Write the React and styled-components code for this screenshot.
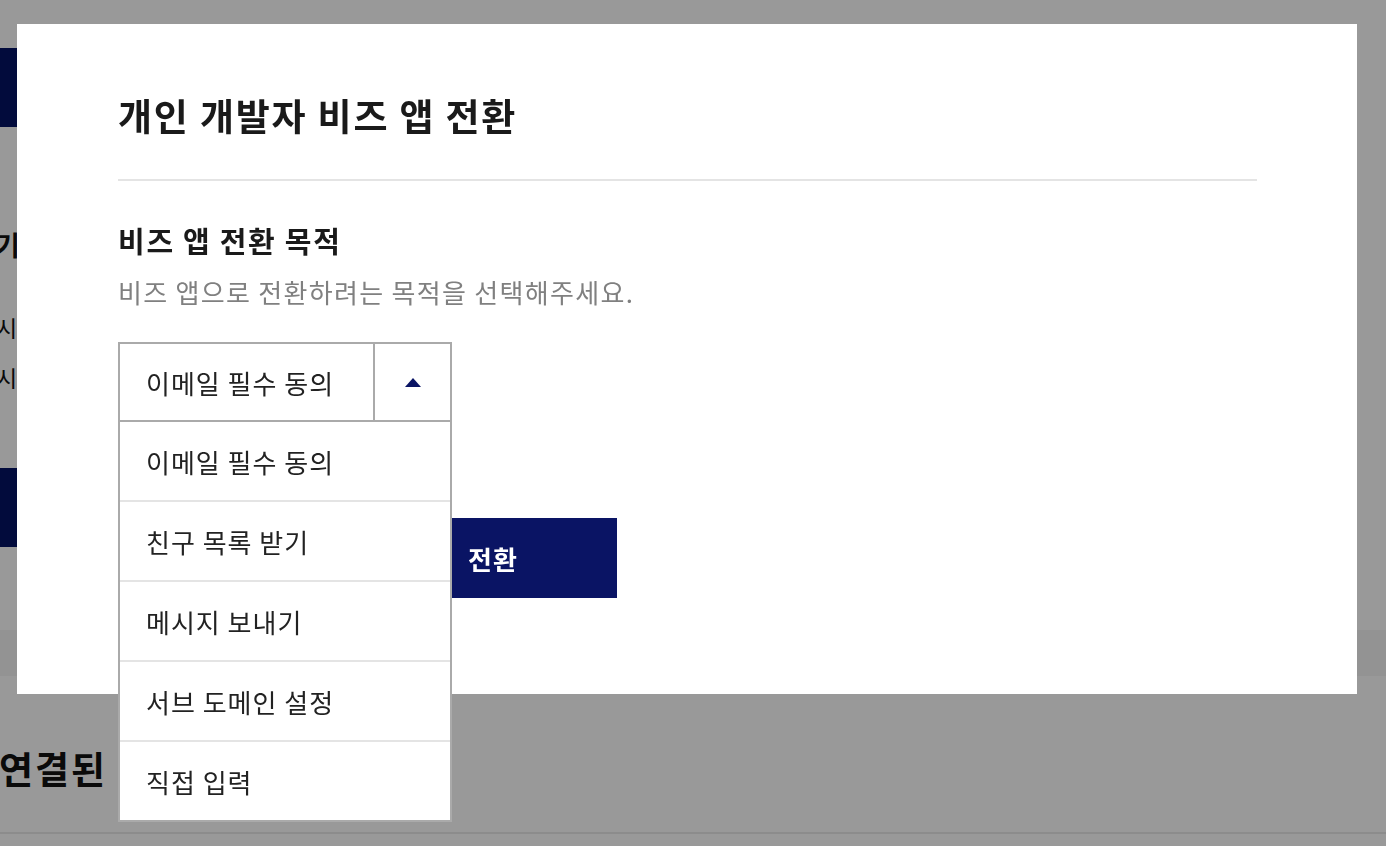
import React, { useState } from "react";
import styled, { createGlobalStyle } from "styled-components";

const NAVY = "#0a1464";
const FONT = `"Noto Sans CJK KR", "Noto Sans", sans-serif`;

const GlobalStyle = createGlobalStyle`
  html, body {
    margin: 0;
    padding: 0;
    background: #fff;
    font-family: ${FONT};
    overflow: hidden;
  }
  * {
    box-sizing: border-box;
  }
`;

const PURPOSES = [
  "이메일 필수 동의",
  "친구 목록 받기",
  "메시지 보내기",
  "서브 도메인 설정",
  "직접 입력"
];

/* page behind the dialog */

const BackPage = styled.div`
  width: 1386px;
  height: 846px;
  display: flex;
  flex-direction: column;
  background: #fff;
  color: #111;
`;

const NavyBlock = styled.div`
  width: 320px;
  height: 79px;
  flex-shrink: 0;
  background: #041364;
  margin-top: ${p => p.$top}px;
`;

const BackHeading = styled.div`
  font-size: 27px;
  font-weight: 700;
  line-height: 36px;
  margin-top: ${p => p.$top}px;
  margin-left: -5px;
`;

const BackLine = styled.div`
  font-size: 23px;
  line-height: 30px;
  margin-top: ${p => p.$top}px;
  margin-left: -4px;
`;

const Band = styled.div`
  height: 46px;
  margin-top: 83px;
  background: #f5f5f5;
`;

const BigHeading = styled.div`
  font-size: 37px;
  font-weight: 700;
  line-height: 50px;
  letter-spacing: 2px;
  margin-top: 67px;
  margin-left: -1px;
`;

const Rule = styled.div`
  height: 2px;
  margin-top: 39px;
  background: #e9e9e9;
`;

/* dialog */

const Backdrop = styled.div`
  position: fixed;
  inset: 0;
  background: rgba(0, 0, 0, 0.4);
  display: flex;
  align-items: flex-start;
  padding: 24px 0 0 17px;
`;

const Modal = styled.div`
  width: 1340px;
  height: 670px;
  background: #fff;
  padding: 0 100px 0 101px;
  display: flex;
  flex-direction: column;
`;

const Title = styled.h1`
  margin: 0;
  padding: 63px 0 36px;
  font-size: 37px;
  font-weight: 700;
  line-height: 56px;
  color: #1a1a1a;
  border-bottom: 2px solid #e4e4e4;
  letter-spacing: 1.8px;
`;

const SectionTitle = styled.h2`
  margin: 38px 0 0;
  font-size: 29px;
  font-weight: 700;
  line-height: 42px;
  letter-spacing: 1.7px;
  color: #1a1a1a;
`;

const Description = styled.p`
  margin: 12px 0 0;
  font-size: 26px;
  line-height: 38px;
  color: #808080;
  letter-spacing: 1.3px;
`;

const SelectWrap = styled.div`
  position: relative;
  width: 334px;
  margin-top: 31px;
`;

const SelectBox = styled.button`
  width: 100%;
  height: 80px;
  display: flex;
  align-items: stretch;
  padding: 0;
  border: 2px solid #aaa;
  background: #fff;
  font-family: ${FONT};
  cursor: pointer;
`;

const SelectValue = styled.span`
  flex: 1;
  display: flex;
  align-items: center;
  padding-left: 26px;
  font-size: 26px;
  letter-spacing: 1px;
  color: #222;
`;

const ArrowCell = styled.span`
  width: 77px;
  display: flex;
  align-items: center;
  justify-content: center;
  border-left: 2px solid #aaa;
`;

const Triangle = styled.span`
  width: 0;
  height: 0;
  border-left: 8px solid transparent;
  border-right: 8px solid transparent;
  border-bottom: 9px solid ${NAVY};
  transform: ${p => (p.$open ? "none" : "rotate(180deg)")};
`;

const OptionList = styled.ul`
  position: absolute;
  top: 100%;
  left: 0;
  width: 100%;
  margin: 0;
  padding: 0;
  list-style: none;
  background: #fff;
  border: 2px solid #aaa;
  border-top: none;
  z-index: 2;
`;

const OptionItem = styled.li`
  height: 80px;
  display: flex;
  align-items: center;
  padding-left: 26px;
  font-size: 26px;
  letter-spacing: 1px;
  color: #222;
  cursor: pointer;

  &:first-child {
    height: 78px;
  }

  & + & {
    border-top: 2px solid #e4e4e4;
  }
`;

const Actions = styled.div`
  display: flex;
  gap: 3px;
  margin-top: 96px;
`;

const ActionButton = styled.button`
  width: 248px;
  height: 80px;
  border: ${p => (p.$primary ? "none" : "2px solid #aaa")};
  background: ${p => (p.$primary ? NAVY : "#fff")};
  color: ${p => (p.$primary ? "#fff" : "#222")};
  font-family: ${FONT};
  font-size: 26px;
  font-weight: 700;
  letter-spacing: 1px;
  cursor: pointer;
`;

const App = () => {
  const [open, setOpen] = useState(true);
  const [value, setValue] = useState(PURPOSES[0]);

  return (
    <>
      <GlobalStyle />
      <BackPage>
        <NavyBlock $top={48} />
        <BackHeading $top={100}>기</BackHeading>
        <BackLine $top={49}>시</BackLine>
        <BackLine $top={20}>시</BackLine>
        <NavyBlock $top={76} />
        <Band />
        <BigHeading>연결된</BigHeading>
        <Rule />
      </BackPage>

      <Backdrop>
        <Modal>
          <Title>개인 개발자 비즈 앱 전환</Title>
          <SectionTitle>비즈 앱 전환 목적</SectionTitle>
          <Description>비즈 앱으로 전환하려는 목적을 선택해주세요.</Description>

          <SelectWrap>
            <SelectBox onClick={() => setOpen(!open)}>
              <SelectValue>{value}</SelectValue>
              <ArrowCell>
                <Triangle $open={open} />
              </ArrowCell>
            </SelectBox>
            {open && (
              <OptionList>
                {PURPOSES.map(item => (
                  <OptionItem
                    key={item}
                    onClick={() => {
                      setValue(item);
                      setOpen(false);
                    }}
                  >
                    {item}
                  </OptionItem>
                ))}
              </OptionList>
            )}
          </SelectWrap>

          <Actions>
            <ActionButton>취소</ActionButton>
            <ActionButton $primary>전환</ActionButton>
          </Actions>
        </Modal>
      </Backdrop>
    </>
  );
};

export default App;
